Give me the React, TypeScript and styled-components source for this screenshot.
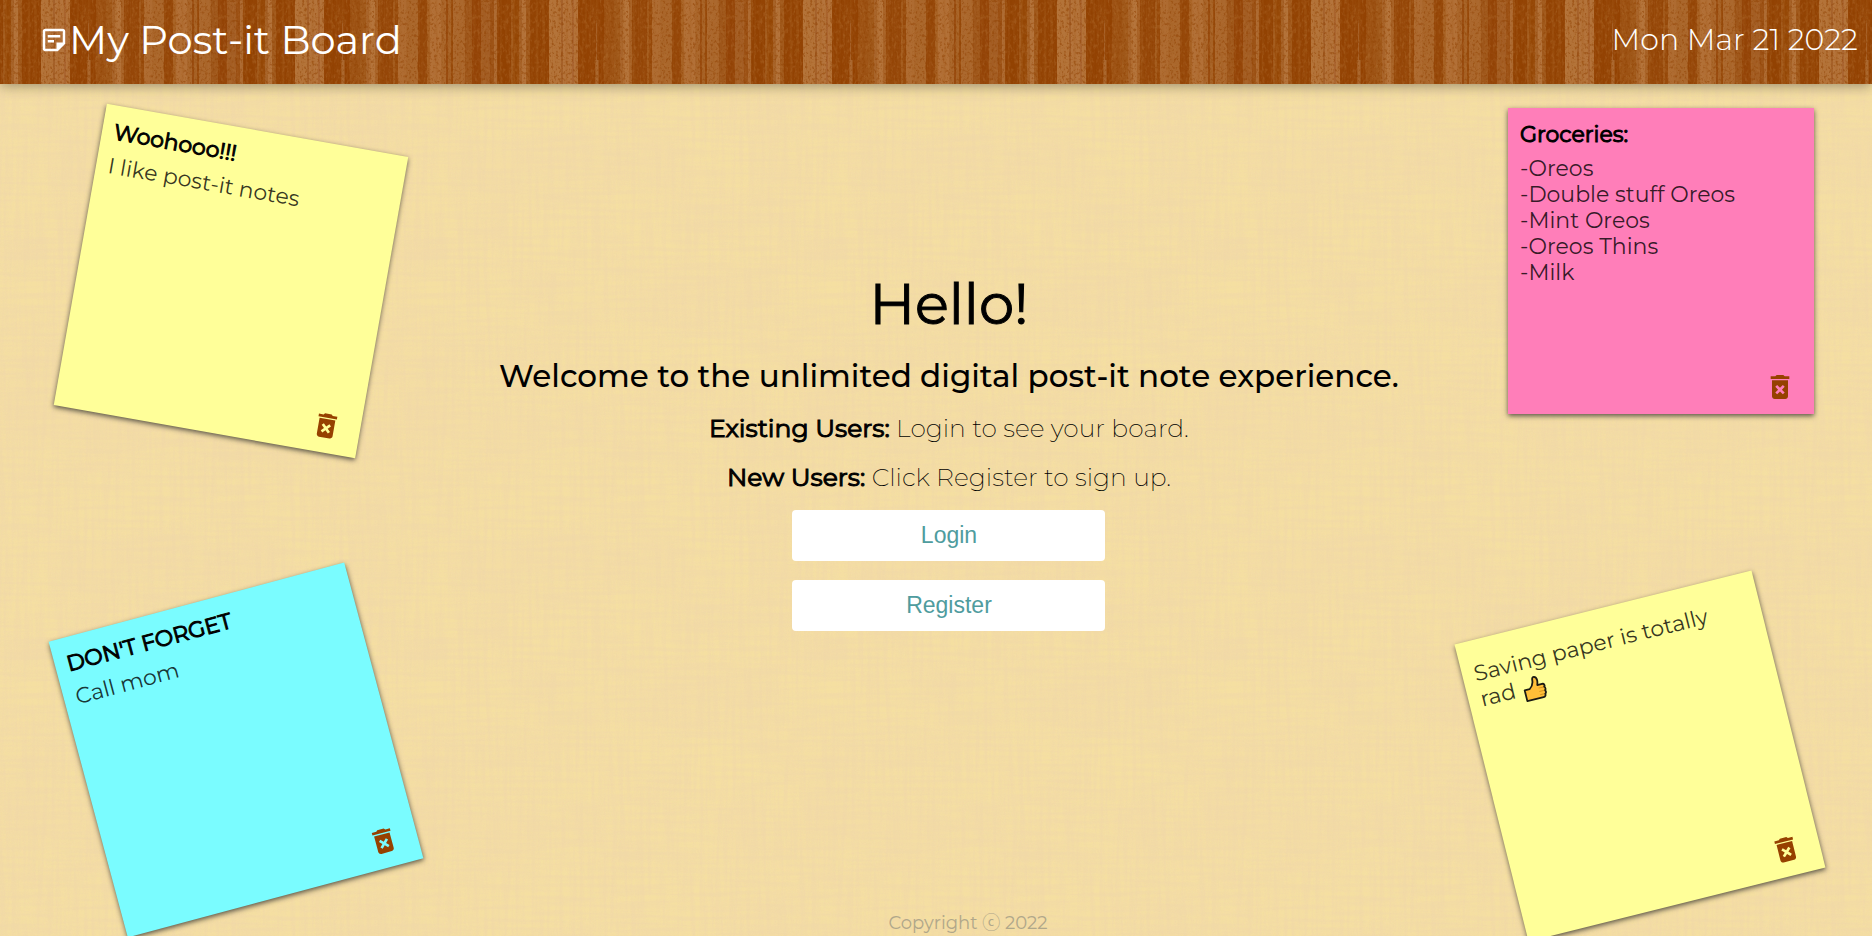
import React from "react";
import styled, { createGlobalStyle } from "styled-components";
import { MdDeleteForever, MdOutlineStickyNote2 } from "react-icons/md";

const svgUrl = (svg: string) => `url("data:image/svg+xml,${encodeURIComponent(svg)}")`;

/* One repeat of the wood panelling: [x, width, colour] for every plank. */
const planks: [number, number, string][] = [
  [0, 12, "#b4743a"], [12, 2, "#a5612a"], [14, 9, "#b4743c"], [23, 2, "#aa6530"], [25, 4, "#b4733a"],
  [29, 26, "#934202"], [55, 10, "#9c5112"], [65, 6, "#9f5718"], [71, 3, "#a8642a"], [74, 6, "#b5753c"], [80, 3, "#a86226"],
  [83, 15, "#954607"], [98, 2, "#a25a1c"], [100, 3, "#984a0a"], [103, 8, "#ae6b31"], [111, 12, "#aa672c"],
  [123, 9, "#954607"], [132, 3, "#a86224"], [135, 11, "#b27037"], [146, 5, "#aa672d"], [151, 2, "#96470a"],
  [153, 3, "#a66226"], [156, 2, "#984a0a"], [158, 12, "#ab682e"], [170, 7, "#9e561a"], [177, 9, "#944407"],
  [186, 9, "#a35d24"], [195, 4, "#9c5114"], [199, 3, "#ae6c34"], [202, 14, "#924202"], [216, 2, "#a0581a"],
  [218, 6, "#964806"], [224, 3, "#a66228"], [227, 4, "#b4743c"], [231, 4, "#a0581a"], [235, 19, "#934303"],
];

const wood = svgUrl(
  `<svg xmlns="http://www.w3.org/2000/svg" width="254" height="84">
<filter id="g" x="0" y="0" width="1" height="1" color-interpolation-filters="sRGB"><feTurbulence type="fractalNoise" baseFrequency=".4 .35" numOctaves="2" seed="4" stitchTiles="stitch"/><feColorMatrix values="0 0 0 0 .56 0 0 0 0 .25 0 0 0 0 0 4 0 0 0 -2"/></filter>
<filter id="l" x="0" y="0" width="1" height="1" color-interpolation-filters="sRGB"><feTurbulence type="fractalNoise" baseFrequency=".35 .2" numOctaves="2" seed="9" stitchTiles="stitch"/><feColorMatrix values="0 0 0 0 .7 0 0 0 0 .44 0 0 0 0 .2 4 0 0 0 -2"/></filter>
<filter id="s" x="0" y="0" width="1" height="1" color-interpolation-filters="sRGB"><feTurbulence type="fractalNoise" baseFrequency=".3 .012" numOctaves="2" seed="12" stitchTiles="stitch"/><feColorMatrix values="0 0 0 0 .65 0 0 0 0 .37 0 0 0 0 .12 4 0 0 0 -1.8"/></filter>
${planks.map(([x, w, c]) => `<rect x="${x}" width="${w}" height="84" fill="${c}"/>`).join("")}
<path d="M47.5 20V60" stroke="#a5602a" stroke-width="1"/><path d="M48 60V84" stroke="#ab6932" stroke-width="3"/>
<rect width="254" height="84" filter="url(#s)" opacity=".35"/><rect width="254" height="84" filter="url(#l)" opacity=".35"/><rect width="254" height="84" filter="url(#g)" opacity=".5"/></svg>`
);

const paper = svgUrl(
  `<svg xmlns="http://www.w3.org/2000/svg" width="400" height="400">
<filter id="v" x="0" y="0" width="1" height="1" color-interpolation-filters="sRGB"><feTurbulence type="fractalNoise" baseFrequency=".25 .015" numOctaves="3" seed="3" stitchTiles="stitch"/><feColorMatrix values="0 0 0 0 .94 0 0 0 0 .84 0 0 0 0 .66 2.6 0 0 0 -.9"/></filter>
<filter id="h" x="0" y="0" width="1" height="1" color-interpolation-filters="sRGB"><feTurbulence type="fractalNoise" baseFrequency=".015 .25" numOctaves="3" seed="7" stitchTiles="stitch"/><feColorMatrix values="0 0 0 0 .94 0 0 0 0 .84 0 0 0 0 .66 2.6 0 0 0 -.9"/></filter>
<filter id="p" x="0" y="0" width="1" height="1" color-interpolation-filters="sRGB"><feTurbulence type="fractalNoise" baseFrequency=".015" numOctaves="2" seed="5" stitchTiles="stitch"/><feColorMatrix values="0 0 0 0 .94 0 0 0 0 .84 0 0 0 0 .66 4 0 0 0 -1.6"/></filter>
<rect width="400" height="400" fill="#f5dfa1"/><rect width="400" height="400" filter="url(#p)" opacity=".25"/><rect width="400" height="400" filter="url(#v)" opacity=".45"/><rect width="400" height="400" filter="url(#h)" opacity=".45"/></svg>`
);

const GlobalStyle = createGlobalStyle`
  * { box-sizing: border-box; }
  body {
    margin: 0;
    font-family: Montserrat, Inter, "Noto Sans CJK JP", sans-serif;
    color: #000;
    background: #f3dca4 ${paper};
  }
`;

const Page = styled.div`
  display: flex;
  flex-direction: column;
  height: 100vh;
  overflow: hidden;
`;

const Header = styled.header`
  display: flex;
  flex: none;
  align-items: center;
  justify-content: space-between;
  height: 84px;
  padding: 0 14px 4px 39px;
  color: #fff;
  background: #954505 ${wood} 41px 0 repeat-x;
  box-shadow: 0 2px 12px rgba(0, 0, 0, 0.35);
`;

const Brand = styled.h1`
  display: flex;
  align-items: center;
  margin: 0;
  font-size: 40px;
  font-weight: 400;
  line-height: 48px;
`;

const Today = styled.time`
  font-size: 30px;
  font-weight: 300;
  line-height: 36px;
`;

const Board = styled.main`
  position: relative;
  display: flex;
  flex: 1;
  flex-direction: column;
  align-items: center;
`;

const Welcome = styled.section`
  display: flex;
  flex: 1;
  flex-direction: column;
  align-items: center;
  padding: 184px 0 0 26px;
  text-align: center;
`;

const Greeting = styled.h2`
  margin: 0 0 16px;
  font-size: 56px;
  font-weight: 400;
  line-height: 72px;
  -webkit-text-stroke: 1px currentColor;
`;

const Tagline = styled.h3`
  margin: 0 0 16px;
  font-size: 31px;
  font-weight: 500;
  line-height: 40px;
`;

const Hint = styled.p`
  margin: 0 0 17px;
  font-size: 25px;
  font-weight: 200;
  line-height: 32px;

  strong {
    font-weight: 400;
    -webkit-text-stroke: 1px currentColor;
  }
`;

const Action = styled.button`
  width: 313px;
  height: 51px;
  margin: 0 0 19px;
  border: 0;
  border-radius: 4px;
  font-family: "Liberation Sans", Arial, sans-serif;
  font-size: 23px;
  color: #4f9c9e;
  background: #fff;
  cursor: pointer;
`;

const Footer = styled.footer`
  padding: 0 0 2px 64px;
  font-size: 18px;
  line-height: 22px;
  color: #b0a78a;
`;

type Place = { top?: number; bottom?: number; left?: number; right?: number };

const Note = styled.article<{ $color: string; $tilt: number; $at: Place }>`
  position: absolute;
  ${({ $at }) => Object.entries($at).map(([side, v]) => `${side}: ${v}px;`).join(" ")}
  display: flex;
  flex-direction: column;
  width: 306px;
  height: 306px;
  padding: 13px 12px 11px;
  background: ${({ $color }) => $color};
  box-shadow: 0 2px 5px rgba(40, 40, 40, 0.75);
  transform: rotate(${({ $tilt }) => $tilt}deg);
`;

const NoteTitle = styled.h4`
  margin: 0;
  font-size: 22px;
  font-weight: 400;
  line-height: 27px;
  -webkit-text-stroke: 1px currentColor;
`;

const NoteText = styled.p`
  flex: 1;
  margin: 8px 0 0;
  padding-right: 24px;
  font-size: 22px;
  font-weight: 400;
  line-height: 26px;
  color: rgba(0, 0, 0, 0.8);
  white-space: pre-line;
`;

const DeleteButton = styled.button`
  display: flex;
  align-self: flex-end;
  margin-right: 6px;
  padding: 0;
  border: 0;
  color: #964100;
  background: none;
  cursor: pointer;
`;

const Thumb = styled.svg`
  width: 24px;
  height: 26px;
  margin-left: 1px;
  vertical-align: -8px;
`;

const ThumbsUp = () => (
  <Thumb viewBox="0 0 24 26" role="img" aria-label="Thumbs up">
    <path
      d="M2 12.5h5c3-2 4.6-5 4.8-8 .1-2.6 1.3-3.3 2.4-3 1.6.4 2.3 2 2.3 4.2 0 1.6-.5 3.2-1 4.6h4.8c2.4 0 2.7 2.5 1.4 3.3 1.4.9 1.2 2.9 0 3.6 1 1 .7 2.9-.6 3.4.4 1.6-.6 2.9-2.4 2.9H2z"
      fill="#ffbf38"
      stroke="#1a1a14"
      strokeWidth="1.8"
      strokeLinejoin="round"
    />
    <path d="M16 13.6h5M16 17.1h5M16 20.4h4" stroke="#d99620" strokeWidth="1" fill="none" />
  </Thumb>
);

type NoteData = {
  title?: string;
  text: React.ReactNode;
  color: string;
  tilt: number;
  at: Place;
};

const notes: NoteData[] = [
  { title: "Woohooo!!!", text: "I like post-it notes", color: "#ffff99", tilt: 10, at: { top: 44, left: 78 } },
  {
    title: "Groceries:",
    text: "-Oreos\n-Double stuff Oreos\n-Mint Oreos\n-Oreos Thins\n-Milk",
    color: "#ff7eb9",
    tilt: 0,
    at: { top: 24, right: 58 },
  },
  { title: "DON'T FORGET", text: "Call mom", color: "#7afcff", tilt: -15, at: { bottom: 33, left: 83 } },
  { text: <>Saving paper is totally rad <ThumbsUp /></>, color: "#ffff99", tilt: -14, at: { bottom: 27, right: 79 } },
];

export default function App() {
  return (
    <Page>
      <GlobalStyle />
      <Header>
        <Brand>
          <MdOutlineStickyNote2 size={30} />
          My Post-it Board
        </Brand>
        <Today dateTime="2022-03-21">Mon Mar 21 2022</Today>
      </Header>
      <Board>
        <Welcome>
          <Greeting>Hello!</Greeting>
          <Tagline>Welcome to the unlimited digital post-it note experience.</Tagline>
          <Hint><strong>Existing Users:</strong> Login to see your board.</Hint>
          <Hint><strong>New Users:</strong> Click Register to sign up.</Hint>
          <Action type="button">Login</Action>
          <Action type="button">Register</Action>
        </Welcome>
        {notes.map((note, i) => (
          <Note key={i} $color={note.color} $tilt={note.tilt} $at={note.at}>
            {note.title && <NoteTitle>{note.title}</NoteTitle>}
            <NoteText>{note.text}</NoteText>
            <DeleteButton type="button" aria-label="Delete note">
              <MdDeleteForever size={32} />
            </DeleteButton>
          </Note>
        ))}
        <Footer>Copyright ⓒ 2022</Footer>
      </Board>
    </Page>
  );
}
